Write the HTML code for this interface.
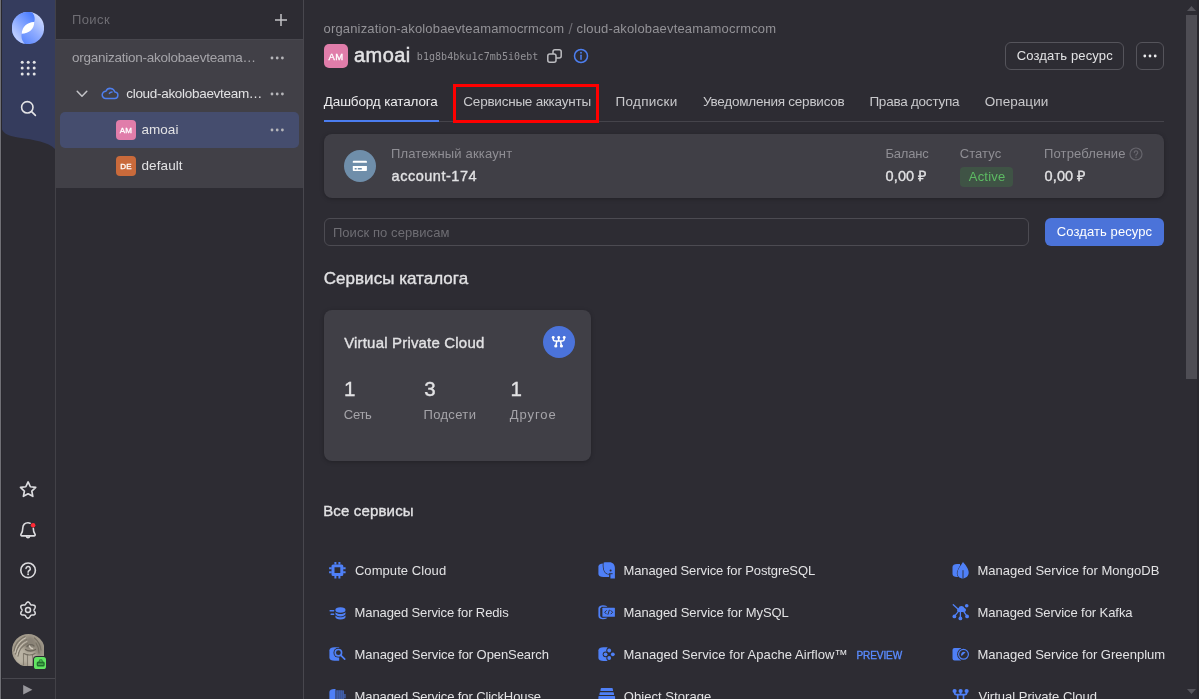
<!DOCTYPE html>
<html lang="ru">
<head>
<meta charset="utf-8">
<title>amoai — Yandex Cloud Console</title>
<style>
html,body{margin:0;padding:0}
body{width:1199px;height:699px;overflow:hidden;background:#2d2c33;position:relative;
  font-family:"Liberation Sans",sans-serif;color:#dddde0}
.abs,.t,svg.i{position:absolute}
.txt{left:0;top:0;width:1199px;height:699px;will-change:transform}
.t{white-space:nowrap;line-height:1;top:0;transform-origin:0 0}
.mono{font-family:"DejaVu Sans Mono","Liberation Mono",monospace}
.med{-webkit-text-stroke:0.35px currentColor}
.med2{-webkit-text-stroke:0.5px currentColor}
.pri{color:#e2e2e4}
.act{color:#ececee}
.tab{color:#c9c9cc}
.sec{color:#939297}
.sec2{color:#a5a4a9}
.sec3{color:#8f8e94}
.dim{color:#6d6c72}
.ph{color:#6e6d73}
.white{color:#fff}
.green{color:#5dbb63}
.blue{color:#5a8bff}
/* rail */
.rail{left:0;top:0;width:56px;height:699px;background:#2d2c33}
.edge{left:0;top:0;width:1px;height:699px;background:#707076;box-shadow:1px 0 0 #29282e}
.rail-line{left:55px;top:0;width:1px;height:699px;background:rgba(255,255,255,.1)}
.rail-sep{left:1px;top:678px;width:54px;height:1px;background:#48474e}
/* sidebar */
.side{left:56px;top:0;width:247px;height:699px;background:#2d2c33}
.side-line{left:303px;top:0;width:1px;height:699px;background:#48474e}
.side-head-line{left:56px;top:39px;width:247px;height:1px;background:#48474e}
.tree{left:56px;top:40px;width:247px;height:148px;background:#414047}
.sel{left:60px;top:112px;width:239px;height:36px;border-radius:5px;background:#454d6e}
.badge{will-change:transform;border-radius:4px;color:#fff;font-weight:400;-webkit-text-stroke:.3px #fff;text-align:center}
.b20{width:20px;height:20px;font-size:8px;line-height:21.500px;letter-spacing:.2px}
.b24{width:24px;height:24px;font-size:9.500px;line-height:25.500px;border-radius:5px;letter-spacing:.3px}
.pink{background:#e07daa}
.orange{background:#c96a3b}
/* main */
.btn-o{border:1px solid #55545b;border-radius:6px;box-sizing:border-box}
.tabs-line{left:324px;top:121px;width:840px;height:1px;background:#45444b}
.tab-act{left:324px;top:120px;width:114.500px;height:2px;background:#4b7df0}
.hl{left:453px;top:84px;width:146px;height:39px;border:3px solid #ff0000;box-sizing:border-box}
.card{background:#403f46;border-radius:8px;box-shadow:0 1px 4px rgba(0,0,0,.25)}
.bill{left:324px;top:134px;width:840px;height:63.500px}
.circ{border-radius:50%}
.status{left:960px;top:167px;width:53px;height:20px;border-radius:4px;background:#3f5345}
.search{left:324px;top:218px;width:705px;height:28px;border:1px solid #4c4b52;border-radius:6px;box-sizing:border-box}
.btn-b{left:1045px;top:218px;width:119px;height:28px;border-radius:6px;background:#4b73d9}
.vpc{left:324px;top:309.700px;width:266.500px;height:151.500px}
/* scrollbar */
.sb-track{left:1185px;top:0;width:14px;height:699px;background:#2d2c33}
.sb-thumb{left:1186px;top:15px;width:11px;height:364px;background:#4e4d54}
.sb-edge{left:1197px;top:0;width:2px;height:699px;background:#28272d}

</style>
</head>
<body>
<!-- left rail -->
<nav class="abs rail">
  <svg class="i" style="left:0;top:0" width="56" height="160" viewBox="0 0 56 160">
    <path d="M1 0H55V149C48 142 35 140 18 137.5C8 136 1 133 1 125Z" fill="#353c5d"/>
  </svg>
  <!-- logo -->
  <svg class="i" style="left:12px;top:12px" width="32" height="32" viewBox="0 0 32 32">
    <defs>
      <linearGradient id="lgB" x1="0.15" y1="0.95" x2="0.9" y2="0.15"><stop offset="0" stop-color="#4a7cff"/><stop offset=".55" stop-color="#8eabff"/><stop offset="1" stop-color="#d2ddff"/></linearGradient>
      <linearGradient id="lgA" x1="0.75" y1="0.05" x2="0.1" y2="0.85"><stop offset="0" stop-color="#4f80ff"/><stop offset=".5" stop-color="#8dabff"/><stop offset="1" stop-color="#d0dbff"/></linearGradient>
    </defs>
    <clipPath id="lgC"><circle cx="16" cy="16" r="16.100"/></clipPath>
    <g clip-path="url(#lgC)">
      <rect x="-1" y="-1" width="34" height="34" fill="url(#lgB)"/>
      <path d="M19 -1C23 3 23.200 7 22.200 10C15.500 10.300 9.800 14.500 9.700 21.700C8.800 26 10.500 30 14 33L-2 33L-2 -2Z" fill="url(#lgA)"/>
      <path d="M9.700 21.700C9.800 14.500 15.500 10.300 22.200 10C22.300 17 17 21.600 9.700 21.700Z" fill="#fff"/>
    </g>
  </svg>
  <!-- apps grid -->
  <svg class="i" style="left:20px;top:60px" width="16" height="16" viewBox="0 0 16 16" fill="#e4e4e6">
    <circle cx="2.2" cy="2.3" r="1.5"/><circle cx="8.2" cy="2.3" r="1.5"/><circle cx="14.2" cy="2.3" r="1.5"/>
    <circle cx="2.2" cy="8.1" r="1.5"/><circle cx="8.2" cy="8.1" r="1.5"/><circle cx="14.2" cy="8.1" r="1.5"/>
    <circle cx="2.2" cy="13.9" r="1.5"/><circle cx="8.2" cy="13.9" r="1.5"/><circle cx="14.2" cy="13.9" r="1.5"/>
  </svg>
  <!-- search -->
  <svg class="i" style="left:19px;top:100px" width="18" height="18" viewBox="0 0 18 18" fill="none" stroke="#e4e4e6" stroke-width="1.6" stroke-linecap="round">
    <circle cx="8.3" cy="7.3" r="5.7"/><path d="M12.6 11.6L16.4 15.4"/>
  </svg>
  <!-- star -->
  <svg class="i" style="left:19px;top:480px" width="19" height="19" viewBox="0 0 19 19" fill="none" stroke="#dcdcdf" stroke-width="1.700" stroke-linejoin="round">
    <path d="M9.10 1.90L11.39 6.74L16.71 7.43L12.81 11.11L13.80 16.37L9.10 13.80L4.40 16.37L5.39 11.11L1.49 7.43L6.81 6.74Z"/>
  </svg>
  <!-- bell -->
  <svg class="i" style="left:19px;top:520px" width="19" height="20" viewBox="0 0 19 20" fill="none" stroke="#dcdcdf" stroke-width="1.600" stroke-linecap="round" stroke-linejoin="round">
    <path d="M14.300 8.300C14.300 11 15 12.800 16 14.200C16.500 15 16 15.900 15 15.900H3C2 15.900 1.500 15 2 14.200C3 12.800 3.800 11 3.800 8C3.800 4.500 6 2.800 9 2.800C9.800 2.800 10.500 2.900 11.100 3.150"/>
    <path d="M7.300 16C7.600 17.200 8.200 17.700 9 17.700S10.400 17.200 10.700 16"/>
    <circle cx="14.100" cy="5.200" r="2.300" fill="#ff2a36" stroke="none"/>
  </svg>
  <!-- help -->
  <svg class="i" style="left:19px;top:561px" width="19" height="19" viewBox="0 0 19 19" fill="none" stroke="#dcdcdf" stroke-width="1.600" stroke-linecap="round">
    <circle cx="9.100" cy="9.300" r="7.300"/>
    <path d="M7 7.600A2.150 2.150 0 1 1 10.200 9.500C9.500 9.900 9.100 10.300 9.100 11.200" stroke-width="1.500"/>
    <circle cx="9.100" cy="13.200" r=".95" fill="#dcdcdf" stroke="none"/>
  </svg>
  <!-- gear -->
  <svg class="i" style="left:19px;top:601px" width="19" height="19" viewBox="0 0 19 19" fill="none" stroke="#dcdcdf" stroke-width="1.500" stroke-linejoin="round">
    <path d="M15.00 9.10L15.04 9.42L15.17 9.75L15.35 10.11L15.58 10.50L15.81 10.92L16.01 11.38L16.16 11.85L16.22 12.31L16.17 12.75L16.01 13.15L15.75 13.48L15.39 13.74L14.96 13.93L14.48 14.03L13.99 14.09L13.50 14.10L13.05 14.10L12.64 14.12L12.30 14.18L12.00 14.30L11.75 14.49L11.52 14.76L11.31 15.11L11.08 15.50L10.82 15.91L10.53 16.31L10.20 16.67L9.83 16.96L9.42 17.14L9.00 17.20L8.58 17.14L8.17 16.96L7.80 16.67L7.47 16.31L7.18 15.91L6.92 15.50L6.69 15.11L6.48 14.76L6.25 14.49L6.00 14.30L5.70 14.18L5.36 14.12L4.95 14.10L4.50 14.10L4.01 14.09L3.52 14.03L3.04 13.93L2.61 13.74L2.25 13.48L1.99 13.15L1.83 12.75L1.78 12.31L1.84 11.85L1.99 11.38L2.19 10.92L2.42 10.50L2.65 10.11L2.83 9.75L2.96 9.42L3.00 9.10L2.96 8.78L2.83 8.45L2.65 8.09L2.42 7.70L2.19 7.28L1.99 6.82L1.84 6.35L1.78 5.89L1.83 5.45L1.99 5.05L2.25 4.72L2.61 4.46L3.04 4.27L3.52 4.17L4.01 4.11L4.50 4.10L4.95 4.10L5.36 4.08L5.70 4.02L6.00 3.90L6.25 3.71L6.48 3.44L6.69 3.09L6.92 2.70L7.18 2.29L7.47 1.89L7.80 1.53L8.17 1.24L8.58 1.06L9.00 1.00L9.42 1.06L9.83 1.24L10.20 1.53L10.53 1.89L10.82 2.29L11.08 2.70L11.31 3.09L11.52 3.44L11.75 3.71L12.00 3.90L12.30 4.02L12.64 4.08L13.05 4.10L13.50 4.10L13.99 4.11L14.48 4.17L14.96 4.27L15.39 4.46L15.75 4.72L16.01 5.05L16.17 5.45L16.22 5.89L16.16 6.35L16.01 6.82L15.81 7.28L15.58 7.70L15.35 8.09L15.17 8.45L15.04 8.78Z"/>
    <circle cx="9" cy="9.100" r="2.500"/>
  </svg>
  <!-- avatar -->
  <svg class="i" style="left:11.800px;top:633.600px" width="32.700" height="32.700" viewBox="0 0 32.700 32.700">
    <defs>
      <clipPath id="avC"><circle cx="16.350" cy="16.350" r="16.350"/></clipPath>
      <filter id="avB" x="-20%" y="-20%" width="140%" height="140%"><feGaussianBlur stdDeviation="0.7"/></filter>
      <filter id="avB2" x="-20%" y="-20%" width="140%" height="140%"><feGaussianBlur stdDeviation="1.6"/></filter>
    </defs>
    <g clip-path="url(#avC)">
      <rect width="33" height="33" fill="#a39b8c"/>
      <g filter="url(#avB2)">
        <ellipse cx="18" cy="9" rx="6" ry="6.500" fill="#898276"/>
        <ellipse cx="9" cy="22" rx="6" ry="8" fill="#b9b2a3"/>
        <ellipse cx="19" cy="25" rx="6" ry="7" fill="#b7b0a1"/>
        <ellipse cx="27" cy="15" rx="4" ry="7" fill="#8f887b"/>
      </g>
      <g filter="url(#avB)" fill="none" stroke-linecap="round">
        <path d="M2 17C3 10 7 5 13 2.500M3.500 20C5 12.500 9 8 14.500 5.500M6 22C7 15.500 10.500 11.500 15.500 9.500" stroke="#7d766a" stroke-width="1.300"/>
        <path d="M3 18.500C4 11.500 8 6.500 13.500 4M5 21C6 14 9.500 10 15 7.500" stroke="#cbc4b6" stroke-width="1"/>
        <path d="M22.500 4C26 7 28.500 11 29 16M24 9C26 12 27 15 27 19" stroke="#787165" stroke-width="1.200"/>
        <path d="M15 12.500C16.500 10.500 20 10 22 12M13.500 15.500C16 17.500 21 17.500 23.500 15.500" stroke="#6c665b" stroke-width="1.300"/>
        <path d="M17.500 12C18 13.500 19 14.500 20.500 14.500" stroke="#d0c9bb" stroke-width="1.400"/>
        <path d="M11.500 19.500V31M15.500 20.500V32M20.500 20.500C21 24 21 28 20.500 32" stroke="#857e71" stroke-width="1.100"/>
        <path d="M12 19.500C15 21.500 20 21.500 23 19.500" stroke="#777064" stroke-width="1.200"/>
      </g>
    </g>
  </svg>
  <div class="abs" style="left:33px;top:655.900px;width:14.300px;height:14px;border-radius:3.500px;background:#2d2c33"></div>
  <div class="abs" style="left:33.900px;top:656.800px;width:12.500px;height:12.200px;border-radius:2.600px;background:#62e562"></div>
  <svg class="i" style="left:35.500px;top:658.500px" width="10" height="9" viewBox="0 0 10 9">
    <path d="M3 2.800L3.900 .9H5.700L6.600 2.800" fill="none" stroke="#2f8a3a" stroke-width="1.100"/>
    <rect x=".7" y="2.500" width="8" height="5.100" rx="1.500" fill="#236f2e"/>
    <rect x="1.800" y="4.500" width="5.800" height="1.200" rx=".6" fill="#62e562" opacity=".7"/>
  </svg>
  <div class="abs rail-sep"></div>
  <svg class="i" style="left:23px;top:684.500px" width="10" height="10" viewBox="0 0 10 10"><path d="M.2 0L9.400 4.700L.2 9.400Z" fill="#98979c"/></svg>
  <div class="abs rail-line"></div>
  <div class="abs edge"></div>
</nav>

<!-- sidebar tree -->
<aside class="abs side"></aside>
<div class="abs side-head-line"></div>
<div class="abs tree"></div>
<div class="abs sel"></div>
<div class="abs side-line"></div>
<svg class="i" style="left:274px;top:13px" width="14" height="14" viewBox="0 0 14 14" stroke="#c2c2c6" stroke-width="1.500" fill="none"><path d="M7 1v12M1 7h12"/></svg>
<svg class="i dots" style="left:270px;top:56px" width="15" height="4" viewBox="0 0 15 4" fill="#b6b6ba"><circle cx="2" cy="2" r="1.400"/><circle cx="7.200" cy="2" r="1.400"/><circle cx="12.400" cy="2" r="1.400"/></svg>
<svg class="i dots" style="left:270px;top:92px" width="15" height="4" viewBox="0 0 15 4" fill="#b6b6ba"><circle cx="2" cy="2" r="1.400"/><circle cx="7.200" cy="2" r="1.400"/><circle cx="12.400" cy="2" r="1.400"/></svg>
<svg class="i dots" style="left:270px;top:128px" width="15" height="4" viewBox="0 0 15 4" fill="#b6b6ba"><circle cx="2" cy="2" r="1.400"/><circle cx="7.200" cy="2" r="1.400"/><circle cx="12.400" cy="2" r="1.400"/></svg>
<svg class="i" style="left:76px;top:90px" width="12" height="8" viewBox="0 0 12 8" fill="none" stroke="#c4c4c8" stroke-width="1.500" stroke-linecap="round" stroke-linejoin="round"><path d="M1.200 1.200L6 6.300l4.800-5.100"/></svg>
<svg class="i" style="left:101px;top:86px" width="18" height="14" viewBox="0 0 18 14" fill="none" stroke="#4f7fee" stroke-width="1.500" stroke-linejoin="round"><path d="M4.700 12.500h8.600a3.300 3.300 0 0 0 .5-6.600A4.700 4.700 0 0 0 4.900 5.300 3.600 3.600 0 0 0 4.700 12.500z"/><path d="M8.400 7.400A3 3 0 0 1 11 5.900" stroke-linecap="round"/></svg>
<div class="abs badge b20 pink" style="left:116px;top:120px">AM</div>
<div class="abs badge b20 orange" style="left:116px;top:156px">DE</div>

<!-- main header -->
<div class="abs badge b24 pink" style="left:324px;top:44px">AM</div>
<svg class="i" style="left:547px;top:49px" width="15" height="14" viewBox="0 0 15 14" fill="none" stroke="#bcbcc0" stroke-width="1.500"><rect x="6" y=".8" width="8.200" height="8.200" rx="2"/><rect x=".8" y="5" width="8.200" height="8.200" rx="2" fill="#2d2c33"/></svg>
<svg class="i" style="left:573px;top:48px" width="16" height="16" viewBox="0 0 16 16" fill="none" stroke="#4d7ff0" stroke-width="1.500"><circle cx="8" cy="8" r="6.500"/><path d="M8 7.300v4" stroke-linecap="round"/><circle cx="8" cy="4.800" r=".95" fill="#4d7ff0" stroke="none"/></svg>
<div class="abs btn-o" style="left:1005px;top:42px;width:119px;height:28px"></div>
<div class="abs btn-o" style="left:1136px;top:42px;width:28px;height:28px"></div>
<svg class="i" style="left:1143px;top:54px" width="14" height="4" viewBox="0 0 14 4" fill="#ececee"><circle cx="1.800" cy="2" r="1.400"/><circle cx="7" cy="2" r="1.400"/><circle cx="12.200" cy="2" r="1.400"/></svg>

<!-- tabs -->
<div class="abs tabs-line"></div>
<div class="abs tab-act"></div>
<div class="abs hl"></div>

<!-- billing card -->
<section class="abs card bill"></section>
<div class="abs circ" style="left:343.800px;top:149.700px;width:32.200px;height:32.200px;background:#6f8eaa"></div>
<svg class="i" style="left:352px;top:160px" width="16" height="12" viewBox="0 0 16 12">
  <path d="M1.600 .7H14.100A.8 .8 0 0 1 14.900 1.500V2.800H.8V1.500A.8 .8 0 0 1 1.600 .7Z" fill="#fff"/>
  <path d="M.8 5.900H14.900V10.200A.8 .8 0 0 1 14.100 11H1.600A.8 .8 0 0 1 .8 10.200Z" fill="#fff"/>
  <path d="M2.700 8H4.600V9.500H2.700ZM5.800 8H9.800V9.500H5.800Z" fill="#6f8eaa"/>
</svg>
<div class="abs status"></div>
<svg class="i" style="left:1129px;top:146.500px" width="14" height="14" viewBox="0 0 14 14" fill="none" stroke="#66656c" stroke-width="1.200" stroke-linecap="round"><circle cx="7" cy="7" r="6"/><path d="M5.300 5.600a1.700 1.700 0 1 1 2.600 1.400c-.6.400-.9.700-.9 1.300"/><circle cx="7" cy="10.200" r=".7" fill="#66656c" stroke="none"/></svg>

<!-- search + create -->
<div class="abs search"></div>
<div class="abs btn-b"></div>

<!-- VPC card -->
<section class="abs card vpc"></section>
<div class="abs circ" style="left:542.700px;top:325.600px;width:32.300px;height:32.300px;background:#4b73da"></div>
<svg class="i" style="left:551px;top:335px" width="16" height="14" viewBox="0 0 16 14" fill="#fff" stroke="#fff">
  <path d="M2.200 2.400V4.300C2.200 5.400 2.800 5.900 3.900 5.900H11.500C12.600 5.900 13.200 5.400 13.200 4.300V2.400M7.700 2.400V5.900M5.900 5.900L4.800 11M9.500 5.900L10.400 11" fill="none" stroke-width="1.500"/>
  <g stroke="none"><circle cx="2.200" cy="2.400" r="1.450"/><circle cx="7.700" cy="2.400" r="1.450"/><circle cx="13.200" cy="2.400" r="1.450"/><circle cx="4.800" cy="11" r="1.600"/><circle cx="10.400" cy="11" r="1.600"/></g>
</svg>

<!-- scrollbar -->
<div class="abs sb-track"></div>
<div class="abs sb-thumb"></div>
<div class="abs sb-edge"></div>
<svg class="i" style="left:1187px;top:6px" width="9" height="5" viewBox="0 0 9 5"><path d="M0 5L4.500 0L9 5Z" fill="#56555c"/></svg>
<svg class="i" style="left:1187px;top:689px" width="9" height="5" viewBox="0 0 9 5"><path d="M0 0L4.500 5L9 0Z" fill="#56555c"/></svg>

<!-- service icons -->
<div class="svc-icons">
<svg class="i" style="left:328.5px;top:562px" width="17" height="17" viewBox="0 0 17 17" fill="#4f80f7">
  <path fill-rule="evenodd" d="M4.100 2.400H12.700A1.600 1.600 0 0 1 14.300 4V12.400A1.600 1.600 0 0 1 12.700 14H4.100A1.600 1.600 0 0 1 2.500 12.400V4A1.600 1.600 0 0 1 4.100 2.400ZM5.500 5.300V11.100H11.300V5.300Z"/>
  <path d="M5.400 0h2v2.600h-2zM9.400 0h2v2.600h-2zM5.400 13.800h2v2.600h-2zM9.400 13.800h2v2.600h-2zM.1 5.200h2.600v2H.1zM.1 9.200h2.600v2H.1zM14.100 5.200h2.500v2h-2.500zM14.100 9.200h2.500v2h-2.500z"/>
</svg>
<svg class="i" style="left:328.5px;top:604px" width="17" height="17" viewBox="0 0 17 17" fill="#4f80f7">
  <rect x=".5" y="6.100" width="4.800" height="1.300" rx=".4"/><rect x="1.500" y="9.600" width="3.800" height="1.300" rx=".4"/>
  <ellipse cx="11.450" cy="6" rx="5.050" ry="2.800"/>
  <path d="M6.400 8.300c1 1.200 2.800 1.800 5.050 1.800s4.050-.6 5.050-1.800v1.500c0 1.500-2.200 2.600-5.050 2.600S6.400 11.300 6.400 9.800z"/>
  <path d="M6.400 11.500c1 1.200 2.800 1.800 5.050 1.800s4.050-.6 5.050-1.800v1.400c0 1.500-2.200 2.500-5.050 2.500S6.400 14.400 6.400 12.900z"/>
</svg>
<svg class="i" style="left:328.500px;top:646px" width="17" height="17" viewBox="0 0 17 17">
  <path d="M.4 4.200C.4 2.400 2.600 1.200 5.400 1.200H10.200V14.700H5.400C2.600 14.700.4 13.500.4 11.700Z" fill="#4f80f7"/>
  <circle cx="9.400" cy="6.700" r="4.900" fill="#2d2c33"/>
  <path d="M12 9.400L15.800 13.200" stroke="#2d2c33" stroke-width="3.400" stroke-linecap="round"/>
  <circle cx="9.400" cy="6.700" r="3.200" fill="none" stroke="#4f80f7" stroke-width="1.600"/>
  <path d="M11.900 9.300L15.700 13.100" stroke="#4f80f7" stroke-width="1.700" stroke-linecap="round"/>
</svg>
<svg class="i" style="left:328.500px;top:688px" width="17" height="17" viewBox="0 0 17 17" fill="#4f80f7">
  <path d="M.4 4C.4 2.200 2.600 1 5.200 1H6.500V14.500H5.200C2.600 14.500.4 13.300.4 11.500Z"/>
  <rect x="7.500" y="2.200" width="1.100" height="11"/><rect x="9.500" y="2.200" width="1.100" height="11"/><rect x="11.500" y="2.200" width="1.100" height="11"/><rect x="13.500" y="2.400" width="1.100" height="10.600"/><rect x="15.500" y="6" width=".9" height="4.400"/>
</svg>
<svg class="i" style="left:598px;top:562px" width="17" height="17" viewBox="0 0 17 17">
  <path d="M.4 4.400C.4 2.600 2.600 1.400 5.400 1.400H8V15H5.400C2.600 15 .4 13.800.4 12Z" fill="#4f80f7"/>
  <path d="M8 11H11.200V15H8Z" fill="#4f80f7"/>
  <path d="M5.700 .5C7.500.2 9.500.3 11.500.3C14.800.3 16.900 2.600 16.900 6V16.400H12.400V12.100C10.400 12.400 8 11.700 6.800 9.700C5.600 7.500 5.100 3.400 5.700 .5Z" fill="#4f80f7" stroke="#2d2c33" stroke-width="1.300" paint-order="stroke"/>
  <rect x="12.400" y="0" width="5" height="17" fill="none"/>
  <circle cx="12.600" cy="8.400" r="1" fill="#2d2c33"/>
  <path d="M10.800 11.700H14.600" stroke="#2d2c33" stroke-width=".9"/>
</svg>
<svg class="i" style="left:598px;top:604px" width="18" height="17" viewBox="0 0 18 17">
  <path d="M1.300 4.600C1.300 3.200 3 2.200 5 2.200S8.800 3.200 8.800 4.600V11.900C8.800 13.300 7.100 14.300 5 14.300S1.300 13.300 1.300 11.900Z" fill="none" stroke="#4f80f7" stroke-width="1.800"/>
  <rect x="3.500" y="2.800" width="14.500" height="10.900" fill="#2d2c33"/>
  <rect x="4.400" y="3.700" width="12.500" height="9.100" rx=".6" fill="#4f80f7"/>
  <path d="M8.600 6.300L6.700 8.250L8.600 10.200M12.700 6.300L14.600 8.250L12.700 10.200M11.400 5.800L9.900 10.700" fill="none" stroke="#2d2c33" stroke-width=".95"/>
</svg>
<svg class="i" style="left:598px;top:646px" width="18" height="17" viewBox="0 0 18 17">
  <path d="M.4 4.200C.4 2.400 2.600 1.200 5.400 1.200H9.500V14.900H5.400C2.600 14.900.4 13.700.4 11.900Z" fill="#4f80f7"/>
  <g fill="#2d2c33"><circle cx="11.200" cy="4.500" r="2.900"/><circle cx="7.600" cy="8.300" r="2.900"/><circle cx="14.800" cy="8.300" r="2.900"/><circle cx="11.200" cy="12" r="2.900"/><circle cx="11.200" cy="8.300" r="2.600"/></g>
  <g fill="#4f80f7"><circle cx="11.200" cy="4.500" r="1.900"/><circle cx="7.600" cy="8.300" r="1.900"/><circle cx="14.800" cy="8.300" r="1.900"/><circle cx="11.200" cy="12" r="1.900"/></g>
</svg>
<svg class="i" style="left:598px;top:687px" width="18" height="14" viewBox="0 0 18 14" fill="#4f80f7">
  <path d="M3.400 1H14.100Q14.600 1 14.700 1.500L15.100 3.500Q15.200 4 14.700 4H2.800Q2.300 4 2.400 3.500L2.800 1.500Q2.900 1 3.400 1Z"/><path d="M2.300 5.300H15.200Q15.700 5.300 15.800 5.800L16.100 7.500Q16.200 8 15.700 8H1.800Q1.300 8 1.400 7.500L1.700 5.800Q1.800 5.300 2.300 5.300Z"/><rect x=".4" y="9.100" width="16.700" height="4" rx=".7"/>
</svg>
<svg class="i" style="left:951.500px;top:562px" width="18" height="17" viewBox="0 0 18 17">
  <path d="M.5 5C.5 3.200 2.400 2.100 5 2.100H8V15H5C2.400 15 .5 13.900.5 12.100Z" fill="#4f80f7"/>
  <path d="M11 0C13.500 3 16.700 6.500 16.700 10.600C16.700 14 14.200 16.400 11 16.400C7.800 16.400 5.400 14.200 5.400 11.400C5.400 7.500 8.800 3.500 11 0Z" fill="#4f80f7" stroke="#2d2c33" stroke-width="1.100" paint-order="stroke"/>
  <path d="M11 8.200V16.400" stroke="#2d2c33" stroke-width=".9"/>
</svg>
<svg class="i" style="left:951.500px;top:604px" width="18" height="17" viewBox="0 0 18 17" fill="#4f80f7" stroke="#4f80f7">
  <path d="M1.300.7L6.500 5.500M6.200 7.600L2.400 12.400M8.400 7.600V14.400M11.800 7.600L15.100 12.400" stroke-width="1.300" fill="none" stroke-linecap="round"/>
  <path d="M6.500 8A1.900 1.900 0 0 1 6.500 4.300A3.100 3.100 0 0 1 12.400 4.100A2 2 0 0 1 12.500 8Z" stroke="none"/>
  <g stroke="none"><circle cx="14.700" cy="1.800" r="1.800"/><circle cx="2.400" cy="12.400" r="1.900"/><circle cx="8.400" cy="14.400" r="1.900"/><circle cx="15.100" cy="12.400" r="1.900"/></g>
</svg>
<svg class="i" style="left:951.500px;top:646px" width="18" height="17" viewBox="0 0 18 17">
  <path d="M2.500 2.100H9V14.400H2.500A2 2 0 0 1 .5 12.400V4.100A2 2 0 0 1 2.500 2.100Z" fill="#4f80f7"/>
  <circle cx="11.500" cy="8.300" r="6.300" fill="#2d2c33"/>
  <circle cx="11.500" cy="8.300" r="4.900" fill="none" stroke="#4f80f7" stroke-width="1.200"/>
  <path d="M9.500 10.200A2.900 2.900 0 0 1 13.600 6.300Z" fill="#4f80f7"/>
</svg>
<svg class="i" style="left:951.500px;top:687px" width="18" height="14" viewBox="0 0 18 14" fill="#4f80f7">
  <circle cx="2.600" cy="4" r="2.100"/><circle cx="8.600" cy="4" r="2.100"/><circle cx="14.600" cy="4" r="2.100"/>
  <path d="M2.600 4V5.800C2.600 7.100 3.300 7.700 4.500 7.700H12.700C13.900 7.700 14.600 7.100 14.600 5.800V4M8.600 4V7.700M5.700 7.700V14M11.500 7.700V14" fill="none" stroke="#4f80f7" stroke-width="1.700"/>
</svg>
</div>

<div class="abs txt">
<span class="t ph" style="left:71.88px;top:13.00px;font-size:13px;letter-spacing:0.439px;">Поиск</span>
<span class="t sec2" style="left:72.04px;top:50.57px;font-size:13.5px;letter-spacing:-0.250px;">organization-akolobaevteama…</span>
<span class="t pri" style="left:126.25px;top:86.57px;font-size:13.5px;letter-spacing:-0.302px;">cloud-akolobaevteam…</span>
<span class="t pri" style="left:141.43px;top:122.57px;font-size:13.5px;letter-spacing:0.052px;">amoai</span>
<span class="t pri" style="left:141.50px;top:158.57px;font-size:13.5px;letter-spacing:0.092px;">default</span>
<span class="t sec" style="left:323.53px;top:22.00px;font-size:13px;letter-spacing:0.166px;">organization-akolobaevteamamocrmcom</span>
<span class="t dim" style="left:568.38px;top:21.30px;font-size:15px;">/</span>
<span class="t sec" style="left:576.53px;top:22.00px;font-size:13px;letter-spacing:0.164px;">cloud-akolobaevteamamocrmcom</span>
<span class="t pri med2" style="left:354.00px;top:45.27px;font-size:20px;letter-spacing:0.422px;">amoai</span>
<span class="t sec mono" style="left:416.80px;top:51.54px;font-size:10px;letter-spacing:0.059px;">b1g8b4bku1c7mb5i0ebt</span>
<span class="t pri" style="left:1016.78px;top:49.00px;font-size:13px;letter-spacing:0.141px;">Создать ресурс</span>
<span class="t act" style="left:323.84px;top:94.57px;font-size:13.5px;letter-spacing:-0.146px;">Дашборд каталога</span>
<span class="t tab" style="left:463.35px;top:94.57px;font-size:13.5px;letter-spacing:-0.233px;">Сервисные аккаунты</span>
<span class="t tab" style="left:615.55px;top:94.57px;font-size:13.5px;letter-spacing:0.279px;">Подписки</span>
<span class="t tab" style="left:702.91px;top:94.57px;font-size:13.5px;letter-spacing:-0.229px;">Уведомления сервисов</span>
<span class="t tab" style="left:869.42px;top:94.57px;font-size:13.5px;letter-spacing:-0.240px;">Права доступа</span>
<span class="t tab" style="left:984.80px;top:94.57px;font-size:13.5px;letter-spacing:0.047px;">Операции</span>
<span class="t sec3" style="left:390.92px;top:147.00px;font-size:13px;letter-spacing:0.174px;">Платежный аккаунт</span>
<span class="t pri med" style="left:391.56px;top:169.33px;font-size:14.5px;letter-spacing:0.525px;">account-174</span>
<span class="t sec3" style="left:885.48px;top:147.00px;font-size:13px;letter-spacing:-0.219px;">Баланс</span>
<span class="t pri med" style="left:885.55px;top:169.33px;font-size:14.5px;letter-spacing:0.129px;">0,00 ₽</span>
<span class="t sec3" style="left:959.78px;top:147.00px;font-size:13px;letter-spacing:0.055px;">Статус</span>
<span class="t green" style="left:968.78px;top:169.80px;font-size:13px;letter-spacing:0.198px;">Active</span>
<span class="t sec3" style="left:1043.92px;top:147.00px;font-size:13px;letter-spacing:0.165px;">Потребление</span>
<span class="t pri med" style="left:1044.55px;top:169.33px;font-size:14.5px;letter-spacing:0.129px;">0,00 ₽</span>
<span class="t ph" style="left:332.88px;top:226.00px;font-size:13px;letter-spacing:0.075px;">Поиск по сервисам</span>
<span class="t white" style="left:1056.78px;top:225.00px;font-size:13px;letter-spacing:0.099px;">Создать ресурс</span>
<span class="t pri med" style="left:323.81px;top:269.61px;font-size:17px;letter-spacing:0.025px;">Сервисы каталога</span>
<span class="t pri med" style="left:344.15px;top:334.80px;font-size:15px;letter-spacing:0.183px;">Virtual Private Cloud</span>
<span class="t pri med" style="left:344.06px;top:379.05px;font-size:20.5px;">1</span>
<span class="t pri med" style="left:424.20px;top:379.05px;font-size:20.5px;">3</span>
<span class="t pri med" style="left:510.38px;top:379.05px;font-size:20.5px;">1</span>
<span class="t sec2" style="left:343.78px;top:408.40px;font-size:13px;letter-spacing:-0.269px;">Сеть</span>
<span class="t sec2" style="left:423.49px;top:408.40px;font-size:13px;letter-spacing:0.339px;">Подсети</span>
<span class="t sec2" style="left:509.84px;top:408.40px;font-size:13px;letter-spacing:0.901px;">Другое</span>
<span class="t pri med" style="left:323.20px;top:502.60px;font-size:15px;letter-spacing:0.157px;">Все сервисы</span>
<span class="t pri" style="left:354.90px;top:564.00px;font-size:13px;letter-spacing:0.076px;">Compute Cloud</span>
<span class="t pri" style="left:354.61px;top:606.00px;font-size:13px;letter-spacing:-0.116px;">Managed Service for Redis</span>
<span class="t pri" style="left:354.61px;top:648.00px;font-size:13px;letter-spacing:-0.078px;">Managed Service for OpenSearch</span>
<span class="t pri" style="left:354.61px;top:690.00px;font-size:13px;letter-spacing:-0.099px;">Managed Service for ClickHouse</span>
<span class="t pri" style="left:623.47px;top:564.00px;font-size:13px;letter-spacing:-0.093px;">Managed Service for PostgreSQL</span>
<span class="t pri" style="left:623.47px;top:606.00px;font-size:13px;letter-spacing:-0.066px;">Managed Service for MySQL</span>
<span class="t pri" style="left:623.47px;top:648.00px;font-size:13px;letter-spacing:0.063px;">Managed Service for Apache Airflow™</span>
<span class="t pri" style="left:623.76px;top:690.00px;font-size:13px;letter-spacing:0.055px;">Object Storage</span>
<span class="t pri" style="left:977.47px;top:564.00px;font-size:13px;letter-spacing:0.018px;">Managed Service for MongoDB</span>
<span class="t pri" style="left:977.47px;top:606.00px;font-size:13px;letter-spacing:-0.071px;">Managed Service for Kafka</span>
<span class="t pri" style="left:977.47px;top:648.00px;font-size:13px;letter-spacing:-0.010px;">Managed Service for Greenplum</span>
<span class="t pri" style="left:978.51px;top:690.00px;font-size:13px;letter-spacing:0.006px;">Virtual Private Cloud</span>
<span class="t blue med" style="left:856.42px;top:650.53px;font-size:10px;letter-spacing:-0.059px;">PREVIEW</span>
</div>

</body>
</html>
